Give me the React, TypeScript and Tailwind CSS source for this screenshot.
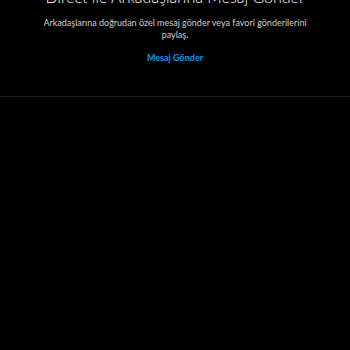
export default function App() {
  return (
    <div className="w-[350px] h-[350px] overflow-hidden bg-black font-['Lato',sans-serif]">
      <section className="flex flex-col items-center text-center -mt-[13px] pb-[32px] border-b border-[#1f1f1f]">
        <h2 className="text-[16px] leading-[20px] font-light text-white">
          Direct ile Arkadaşlarına Mesaj Gönder
        </h2>
        <p className="mt-[10px] w-[270px] text-[9px] leading-[12px] text-[#cfcfcf]">
          Arkadaşlarına doğrudan özel mesaj gönder veya favori gönderilerini paylaş.
        </p>
        <button className="mt-[11px] text-[9px] leading-[12px] font-bold text-[#0095f6]">
          Mesaj Gönder
        </button>
      </section>
    </div>
  )
}
